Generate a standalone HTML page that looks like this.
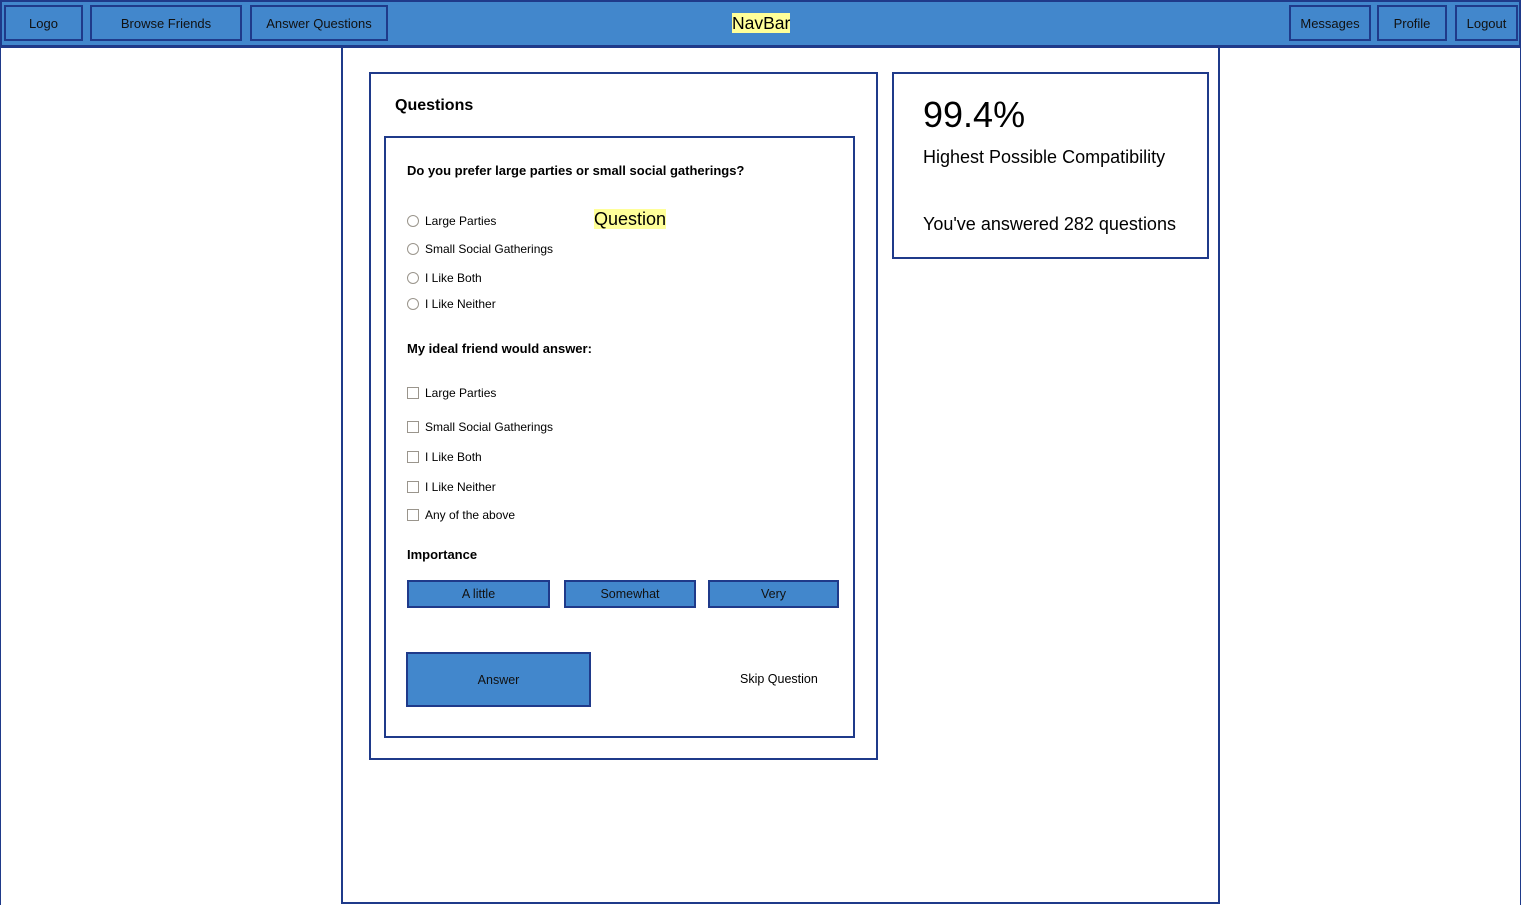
<!DOCTYPE html>
<html><head><meta charset="utf-8"><style>
*{box-sizing:border-box;margin:0;padding:0}
body{width:1521px;height:905px;position:relative;background:#fff;font-family:"Liberation Sans",sans-serif;color:#000;overflow:hidden}
.a{position:absolute}
.b{position:absolute;border:2px solid #1f3a8a}
.btn{position:absolute;border:2px solid #1f3a8a;background:#4287cc;font-size:13px;display:flex;align-items:center;justify-content:center;color:#111}
.t{position:absolute;font-size:12px;white-space:nowrap}
.r{position:absolute;width:12px;height:12px;border:1px solid #9a958c;border-radius:50%;background:#fff}
.c{position:absolute;width:12px;height:12px;border:1px solid #9a958c;background:#fff}
.h{position:absolute;font-size:13px;font-weight:bold;white-space:nowrap}
</style></head><body>
<div class="a" style="left:0;top:0;width:1521px;height:48px;background:#4287cc;border:2px solid #1f3a8a;border-bottom-width:3px"></div>
<div class="btn" style="left:4px;top:5px;width:79px;height:36px">Logo</div>
<div class="btn" style="left:90px;top:5px;width:152px;height:36px">Browse Friends</div>
<div class="btn" style="left:250px;top:5px;width:138px;height:36px">Answer Questions</div>
<div class="a" style="left:732px;top:13px;font-size:17.5px;background:#ffff99;line-height:20px">NavBar</div>
<div class="btn" style="left:1289px;top:5px;width:82px;height:36px">Messages</div>
<div class="btn" style="left:1377px;top:5px;width:70px;height:36px">Profile</div>
<div class="btn" style="left:1455px;top:5px;width:63px;height:36px">Logout</div>

<div class="a" style="left:0;top:47px;width:1521px;height:858px;border-left:1px solid #1f3a8a;border-right:1px solid #1f3a8a"></div>
<div class="b" style="left:341px;top:46px;width:879px;height:858px"></div>

<div class="b" style="left:369px;top:72px;width:509px;height:688px"></div>
<div class="a" style="left:395px;top:97px;font-size:16px;font-weight:bold">Questions</div>
<div class="b" style="left:384px;top:136px;width:471px;height:602px"></div>
<div class="h" style="left:407px;top:163px">Do you prefer large parties or small social gatherings?</div>
<div class="a" style="left:594px;top:209px;font-size:18px;background:#ffff99;line-height:20px">Question</div>
<div class="r" style="left:407px;top:215px"></div><div class="t" style="left:425px;top:214px">Large Parties</div>
<div class="r" style="left:407px;top:243px"></div><div class="t" style="left:425px;top:242px">Small Social Gatherings</div>
<div class="r" style="left:407px;top:272px"></div><div class="t" style="left:425px;top:271px">I Like Both</div>
<div class="r" style="left:407px;top:298px"></div><div class="t" style="left:425px;top:297px">I Like Neither</div>
<div class="h" style="left:407px;top:341px">My ideal friend would answer:</div>
<div class="c" style="left:407px;top:387px"></div><div class="t" style="left:425px;top:386px">Large Parties</div>
<div class="c" style="left:407px;top:421px"></div><div class="t" style="left:425px;top:420px">Small Social Gatherings</div>
<div class="c" style="left:407px;top:451px"></div><div class="t" style="left:425px;top:450px">I Like Both</div>
<div class="c" style="left:407px;top:481px"></div><div class="t" style="left:425px;top:480px">I Like Neither</div>
<div class="c" style="left:407px;top:509px"></div><div class="t" style="left:425px;top:508px">Any of the above</div>
<div class="h" style="left:407px;top:547px">Importance</div>
<div class="btn" style="left:407px;top:580px;width:143px;height:28px;font-size:12.5px">A little</div>
<div class="btn" style="left:564px;top:580px;width:132px;height:28px;font-size:12.5px">Somewhat</div>
<div class="btn" style="left:708px;top:580px;width:131px;height:28px;font-size:12.5px">Very</div>
<div class="btn" style="left:406px;top:652px;width:185px;height:55px;font-size:12.5px">Answer</div>
<div class="t" style="left:740px;top:672px;font-size:12.5px">Skip Question</div>

<div class="b" style="left:892px;top:72px;width:317px;height:187px"></div>
<div class="a" style="left:923px;top:94px;font-size:36px">99.4%</div>
<div class="a" style="left:923px;top:147px;font-size:18px">Highest Possible Compatibility</div>
<div class="a" style="left:923px;top:214px;font-size:18px">You've answered 282 questions</div>
</body></html>
